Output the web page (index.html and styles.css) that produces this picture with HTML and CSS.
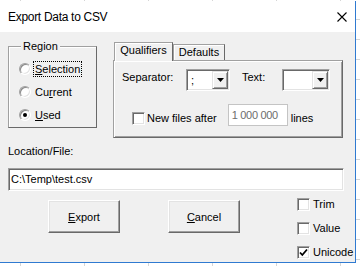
FILE: index.html
```html
<!DOCTYPE html>
<html lang="en">
  <head>
    <meta charset="UTF-8" />
    <title>Export Data to CSV</title>
    <link rel="stylesheet" href="styles.css">
  </head>
  <body>
    <div class="desk">
      <div class="window">
        <div class="titlebar">
          <span class="title">Export Data to CSV</span>
          <svg class="close" width="10" height="10" viewBox="0 0 10 10">
            <path d="M0.5 0.5L9.5 9.5M9.5 0.5L0.5 9.5" stroke="#000" stroke-width="1.1" fill="none" />
          </svg>
        </div>

        <div class="client">
          <div class="top-row">
            <div class="region">
              <div class="legend">Region</div>
              <div class="radio-row">
                <span class="radio"></span>
                <span class="radio-label focused"><u>S</u>election</span>
              </div>
              <div class="radio-row">
                <span class="radio"></span>
                <span class="radio-label">Cu<u>r</u>rent</span>
              </div>
              <div class="radio-row">
                <span class="radio on"></span>
                <span class="radio-label"><u>U</u>sed</span>
              </div>
            </div>

            <div class="tabs">
              <div class="tab-strip">
                <span class="tab active">Qualifiers</span>
                <span class="tab">Defaults</span>
              </div>
              <div class="tab-panel">
                <div class="panel-row">
                  <span class="field-label sep-label">Separator:</span>
                  <div class="combo sep-combo">
                    <span class="combo-value">;</span>
                    <span class="combo-btn">
                      <svg width="7" height="4" viewBox="0 0 7 4"><path d="M0 0H7L3.5 4Z" fill="#000" /></svg>
                    </span>
                  </div>
                  <span class="field-label text-label">Text:</span>
                  <div class="combo text-combo">
                    <span class="combo-value"></span>
                    <span class="combo-btn">
                      <svg width="7" height="4" viewBox="0 0 7 4"><path d="M0 0H7L3.5 4Z" fill="#000" /></svg>
                    </span>
                  </div>
                </div>
                <div class="panel-row second">
                  <span class="check files-check"></span>
                  <span class="files-label">New files after</span>
                  <div class="lines-box">1 000 000</div>
                  <span class="lines-label">lines</span>
                </div>
              </div>
            </div>
          </div>

          <div class="location-label">Location/File:</div>
          <div class="path-box">C:\Temp\test.csv</div>

          <div class="bottom-row">
            <button class="btn"><u>E</u>xport</button>
            <button class="btn cancel"><u>C</u>ancel</button>
            <div class="options">
              <div class="check-row"><span class="check"></span>Trim</div>
              <div class="check-row"><span class="check"></span>Value</div>
              <div class="check-row last">
                <span class="check">
                  <svg width="11" height="11" viewBox="0 0 11 11"><path d="M2 5.5L4.3 8L9 2.5" stroke="#000" stroke-width="1.8" fill="none" /></svg>
                </span>Unicode
              </div>
            </div>
          </div>
        </div>
      </div>
    </div>
  </body>
</html>
```

FILE: styles.css
```css
* {
  box-sizing: border-box;
}

body {
  margin: 0;
  font-family: "Liberation Sans", Arial, sans-serif;
  font-size: 11px;
  color: #000;
}

.desk {
  width: 360px;
  height: 266px;
  padding-top: 1px;
  background-color: #fff;
  background-image:
    repeating-linear-gradient(90deg, transparent 0 20px, #d6d6d6 20px 21px, transparent 21px 64px),
    repeating-linear-gradient(180deg, transparent 0 19px, #d6d6d6 19px 20px);
  overflow: hidden;
}

.window {
  width: 356px;
  height: 262px;
  border-right: 1px solid #2f7ad1;
  border-bottom: 1px solid #2f7ad1;
  display: flex;
  flex-direction: column;
}

.titlebar {
  height: 31px;
  flex-shrink: 0;
  background: #fff;
  display: flex;
  align-items: center;
  justify-content: space-between;
  padding: 0 8px;
}

.title {
  font-size: 12px;
  letter-spacing: -0.3px;
  line-height: 14px;
}

.client {
  flex: 1;
  min-height: 0;
  overflow: hidden;
  background: #f0f0f0;
  display: flex;
  flex-direction: column;
}

.top-row {
  display: flex;
  align-items: flex-start;
  flex-shrink: 0;
  padding: 10px 0 0 8px;
}

/* Region frame */
.region {
  width: 89px;
  height: 82px;
  margin-top: 4px;
  border: 1px solid;
  border-color: #a0a0a0 #696969 #696969 #a0a0a0;
  box-shadow: inset 1px 1px #fff;
  padding-left: 10px;
}

.legend {
  width: fit-content;
  margin: -7px 0 4px 2px;
  padding: 0 2px;
  line-height: 13px;
  background: #f0f0f0;
}

.radio-row {
  height: 23px;
  display: flex;
  align-items: center;
}

.radio {
  width: 12px;
  height: 12px;
  border-radius: 50%;
  border: 1px solid;
  border-color: #a0a0a0 #fff #fff #a0a0a0;
  box-shadow: inset 1px 1px #8a8a8a, inset -1px -1px #e3e3e3;
  background: #fff;
  display: flex;
  align-items: center;
  justify-content: center;
}

.radio.on::after {
  content: "";
  width: 4px;
  height: 4px;
  border-radius: 50%;
  background: #000;
}

.radio-label {
  margin-left: 2px;
  padding: 0 1px;
  line-height: 14px;
  border: 1px solid transparent;
}

.radio-label.focused {
  border: 1px dotted #000;
}

/* Tab control */
.tabs {
  margin-left: 16px;
}

.tab-strip {
  display: flex;
  align-items: flex-end;
  height: 18px;
  padding-left: 1px;
}

.tab {
  width: 52px;
  height: 16px;
  line-height: 14px;
  text-align: center;
  border: 1px solid;
  border-bottom: none;
  border-color: #a0a0a0 #696969 #a0a0a0 #a0a0a0;
  box-shadow: inset 1px 1px #fff;
  background: #f0f0f0;
}

.tab.active {
  width: 59px;
  height: 19px;
  line-height: 15px;
  margin-bottom: -1px;
  position: relative;
  z-index: 1;
}

.tab-panel {
  width: 230px;
  height: 78px;
  border: 1px solid;
  border-color: #a0a0a0 #696969 #696969 #a0a0a0;
  box-shadow: inset 1px 1px #fff, inset -1px -1px #a0a0a0;
  padding: 8px 0 0 8px;
}

.panel-row {
  display: flex;
  align-items: flex-start;
}

.field-label {
  line-height: 13px;
  margin-top: 2px;
}

.sep-label {
  width: 64px;
}

.text-label {
  width: 40px;
  margin-left: 12px;
}

.combo {
  height: 22px;
  display: flex;
  border: 1px solid;
  border-color: #a0a0a0 #fff #fff #a0a0a0;
  box-shadow: inset 1px 1px #696969, inset -1px -1px #e3e3e3;
  background: #fff;
  padding: 1px;
}

.sep-combo {
  width: 44px;
}

.text-combo {
  width: 48px;
}

.combo-value {
  flex: 1;
  padding-left: 3px;
  line-height: 18px;
}

.combo-btn {
  width: 16px;
  height: 18px;
  background: #f0f0f0;
  border: 1px solid;
  border-color: #e3e3e3 #696969 #696969 #e3e3e3;
  box-shadow: inset 1px 1px #fff, inset -1px -1px #a0a0a0;
  display: flex;
  align-items: center;
  justify-content: center;
}

.panel-row.second {
  margin-top: 13px;
  padding-left: 10px;
}

.check {
  width: 13px;
  height: 13px;
  flex-shrink: 0;
  border: 1px solid;
  border-color: #a0a0a0 #fff #fff #a0a0a0;
  box-shadow: inset 1px 1px #696969, inset -1px -1px #e3e3e3;
  background: #fff;
  display: flex;
  align-items: center;
  justify-content: center;
}

.files-check {
  margin-top: 8px;
}

.files-label {
  margin: 8px 0 0 2px;
  line-height: 13px;
}

.lines-box {
  width: 60px;
  height: 22px;
  margin-left: 11px;
  border: 1px solid #c4c4c4;
  background: #fff;
  color: #6d6d6d;
  padding-left: 3px;
  line-height: 20px;
  letter-spacing: -0.3px;
}

.lines-label {
  margin: 8px 0 0 3px;
  line-height: 13px;
}

/* Location */
.location-label {
  flex-shrink: 0;
  margin: 7px 0 0 8px;
  line-height: 13px;
}

.path-box {
  flex-shrink: 0;
  width: 336px;
  height: 23px;
  margin: 10px 0 0 8px;
  border: 1px solid;
  border-color: #a0a0a0 #fff #fff #a0a0a0;
  box-shadow: inset 1px 1px #696969, inset -1px -1px #e3e3e3;
  background: #fff;
  padding-left: 2px;
  line-height: 21px;
}

/* Buttons and options */
.bottom-row {
  display: flex;
  align-items: flex-start;
  flex-shrink: 0;
  padding-left: 48px;
}

.btn {
  width: 72px;
  height: 33px;
  margin-top: 9px;
  font-family: inherit;
  font-size: 11px;
  color: #000;
  background: #f0f0f0;
  border: 1px solid;
  border-color: #fff #696969 #696969 #fff;
  box-shadow: inset -1px -1px #a0a0a0, inset 1px 1px #e3e3e3;
  padding: 0;
}

.btn.cancel {
  margin-left: 48px;
}

.options {
  margin: 7px 0 0 57px;
}

.check-row {
  height: 24px;
  display: flex;
  align-items: flex-start;
  gap: 3px;
  line-height: 13px;
}

.check-row.last {
  height: 13px;
}
```
